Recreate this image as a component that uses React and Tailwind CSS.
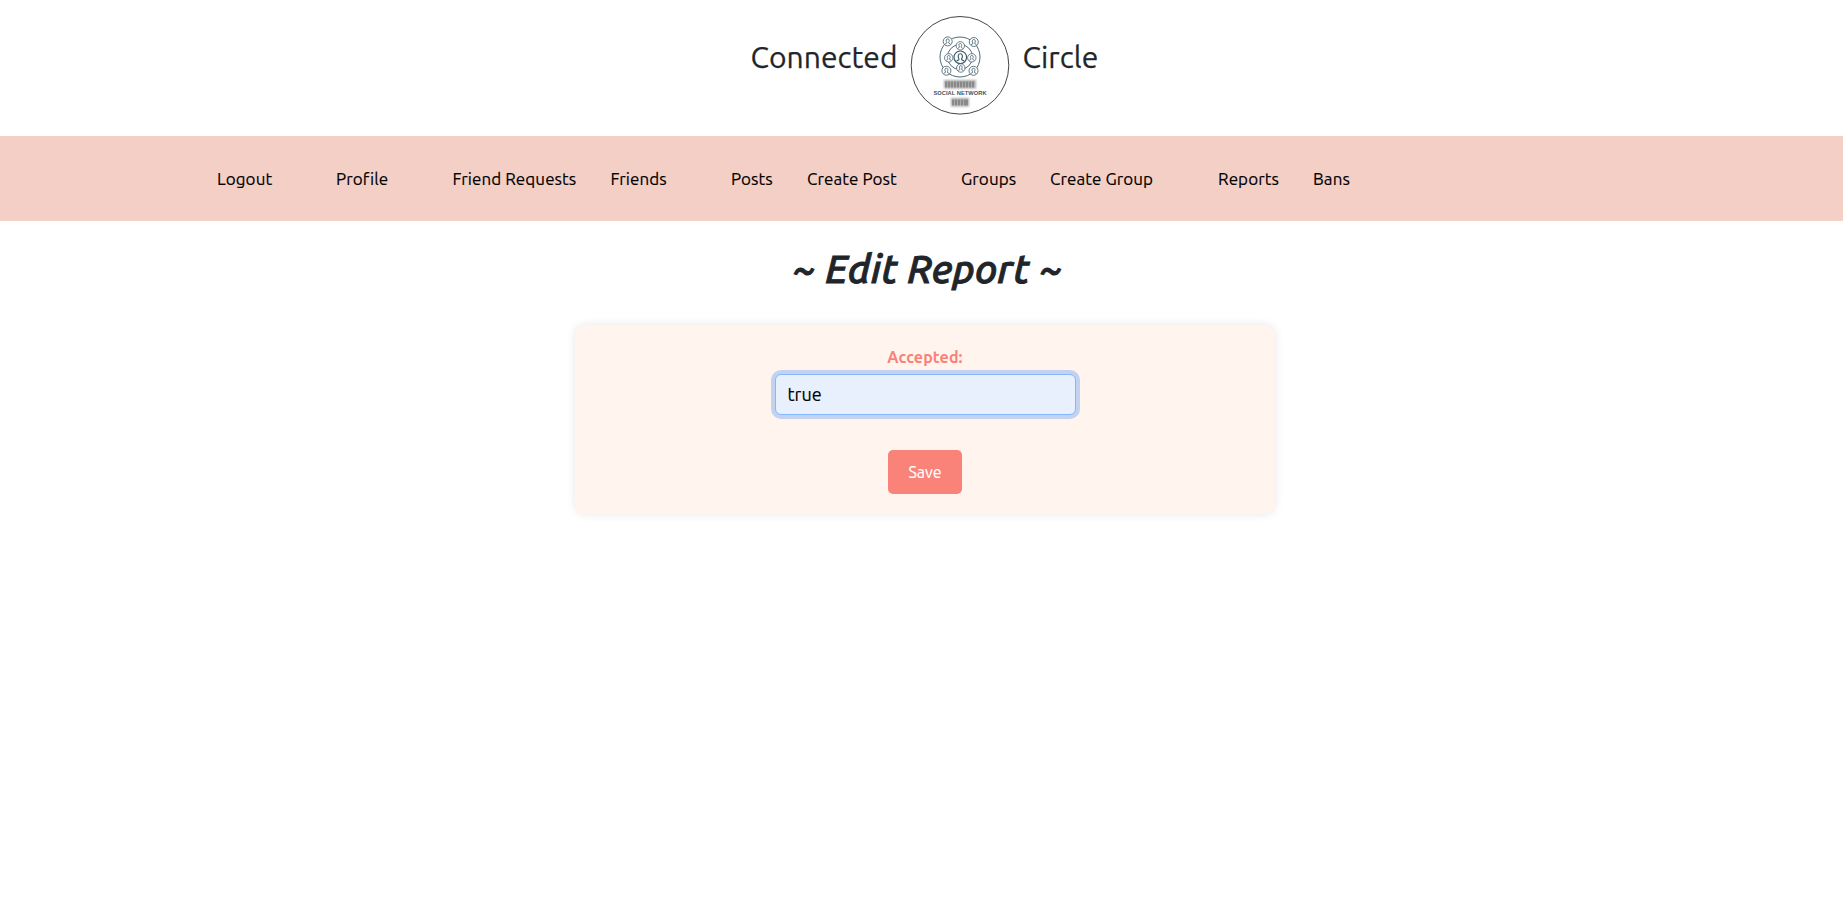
const NAV = [
  { label: "Logout", cls: "w-[119px]" },
  { label: "Profile", cls: "w-[116.5px]" },
  { label: "Friend Requests", cls: "w-[158px]" },
  { label: "Friends", cls: "w-[120.5px]" },
  { label: "Posts", cls: "w-[76px]" },
  { label: "Create Post", cls: "w-[154px]" },
  { label: "Groups", cls: "w-[89px]" },
  { label: "Create Group", cls: "w-[168px]" },
  { label: "Reports", cls: "w-[95px]" },
  { label: "Bans", cls: "w-[60px]" },
];

function Person({ x, y, r }) {
  return (
    <g transform={`translate(${x} ${y}) scale(${r / 5})`}>
      <circle r="5" fill="#fff" />
      <path d="M-1 1.2C-2.2 -.4 -1.8 -2.8 0 -2.8S2.2 -.4 1 1.2L1.2 2 3 3M-1 1.2L-1.2 2-3 3" />
    </g>
  );
}

function Logo() {
  return (
    <svg viewBox="0 0 100 100" className="h-[100px] w-[100px] shrink-0" fill="none">
      <defs>
        <filter id="soft" x="-30%" y="-60%" width="160%" height="220%">
          <feGaussianBlur stdDeviation="1.1" />
        </filter>
        <filter id="slight" x="-10%" y="-20%" width="120%" height="140%">
          <feGaussianBlur stdDeviation="0.6" />
        </filter>
      </defs>
      <circle cx="50" cy="50.3" r="48.8" fill="#fff" stroke="#444" strokeWidth="1" />
      <g stroke="#3d5968" strokeWidth="0.9">
        <circle cx="50" cy="42" r="20" />
        <circle cx="50" cy="42" r="12.5" />
        <Person x={50.3} y={42.3} r={6.3} />
        <Person x={50.3} y={30.8} r={4.2} />
        <Person x={38.7} y={42.8} r={4.2} />
        <Person x={61.8} y={42.8} r={4.2} />
        <Person x={50.8} y={53} r={4.2} />
        <Person x={37.7} y={26.4} r={4.5} />
        <Person x={63.8} y={27} r={4.5} />
        <Person x={36.4} y={55.7} r={4.5} />
        <Person x={63.5} y={55.8} r={4.5} />
      </g>
      <g filter="url(#soft)">
        <rect x="34" y="65" width="32" height="8.5" fill="#aaa" />
        <rect x="41" y="83" width="18" height="8.5" fill="#aaa" />
      </g>
      <path filter="url(#slight)" d="M36 66.5v6M39 66.5v6M42 66.5v6M45 66.5v6M48 66.5v6M51 66.5v6M54 66.5v6M57 66.5v6M60 66.5v6M63 66.5v6M43 84.5v6M46 84.5v6M49 84.5v6M52 84.5v6M55 84.5v6M57 84.5v6" stroke="#555" strokeWidth="1.3" opacity=".6" />
      <text x="50" y="80.1" textAnchor="middle" fontSize="5.7" fontWeight="700" fill="#3c5361" fontFamily="Liberation Sans, sans-serif">SOCIAL NETWORK</text>
    </svg>
  );
}

export default function App() {
  return (
    <div className="min-h-screen bg-white font-['Ubuntu','Noto_Sans',sans-serif] text-[#212529]">
      <header className="flex h-[136px] items-start pl-[750.5px] pt-[15px] text-[30px] leading-[35px] tracking-[0.06px] [-webkit-text-stroke:0.25px]">
        <span className="mt-[25px] w-[159.5px] whitespace-nowrap">Connected</span>
        <Logo />
        <span className="ml-[12.5px] mt-[25px] whitespace-nowrap">Circle</span>
      </header>
      <nav className="flex h-[85px] items-center bg-[#f4cfc6] pl-[217px] text-[17px] leading-[26px] tracking-[0.08px] text-black [-webkit-text-stroke:0.15px]">
        {NAV.map((n) => (
          <a key={n.label} className={`${n.cls} whitespace-nowrap`}>{n.label}</a>
        ))}
      </nav>
      <main className="flex flex-col items-center pl-[7px]">
        <h1 className="ml-[5px] mt-6 whitespace-nowrap text-[40px] font-medium italic leading-[48px] tracking-[0.2px] [-webkit-text-stroke:0.9px]">~ Edit Report ~</h1>
        <form className="mt-[32px] flex h-[189px] w-[700px] flex-col items-center rounded-[11px] bg-[#fff4ee] pt-[20px] shadow-[0_0_10px_rgba(0,0,0,0.1)]">
          <label className="text-base font-bold leading-6 tracking-[0.1px] text-[#fa8278]">Accepted:</label>
          <input
            readOnly
            value="true"
            className="mt-[5px] h-[41px] w-[301px] rounded-md border border-[#86b7fe] bg-[#e8f0fe] px-3 pb-px text-[18px] text-black shadow-[0_0_0_4px_rgba(13,110,253,0.25)] outline-none [-webkit-text-stroke:0.15px]"
          />
          <button type="button" className="mt-[35px] h-11 w-[74px] rounded-[5px] bg-[#fa8379] pb-px text-base text-white [-webkit-text-stroke:0.15px]">Save</button>
        </form>
      </main>
    </div>
  );
}
